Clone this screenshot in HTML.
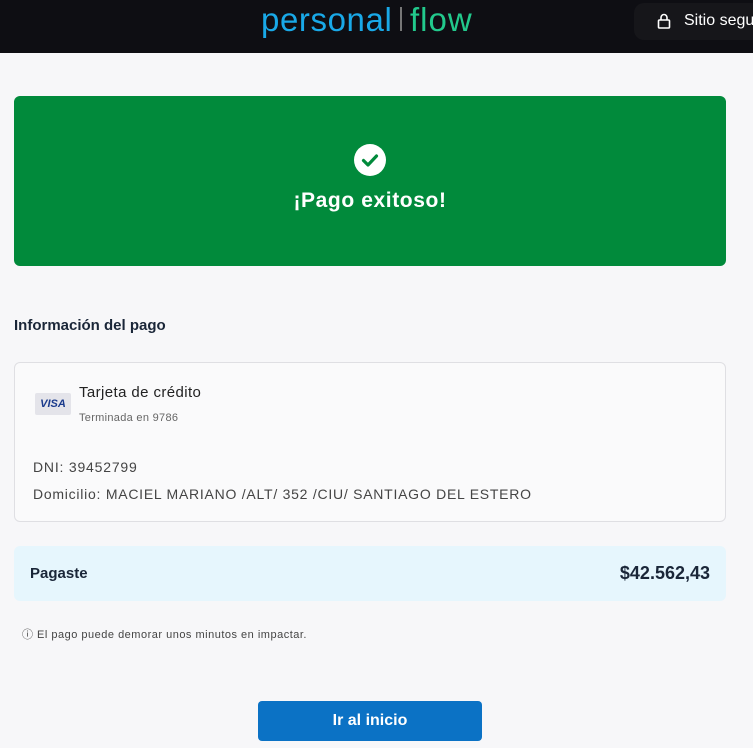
<html><head><style>
body{margin:0;width:753px;height:748px;background:#f7f7f9;font-family:"Liberation Sans",sans-serif;position:relative;overflow:hidden}
.hdr{position:absolute;left:0;top:0;width:753px;height:53px;background:#0e0e13}
.logo{position:absolute;top:1px;font-size:33px;color:#19a9e8;letter-spacing:0px}
.sep{position:absolute;left:400px;top:7px;width:2px;height:24px;background:#777}
.safe{position:absolute;left:634px;top:3px;width:140px;height:37px;background:#16161a;border-radius:10px;color:#fff;font-size:16px}
.green{position:absolute;left:14px;top:96px;width:712px;height:170px;background:#018a3b;border-radius:6px;color:#fff;text-align:center}
.card{position:absolute;left:14px;top:362px;width:710px;height:158px;border:1px solid #dfdfe3;border-radius:6px;background:#fafafb}
.pay{position:absolute;left:14px;top:546px;width:712px;height:55px;background:#e6f6fd;border-radius:6px}
.btn{position:absolute;left:258px;top:701px;width:224px;height:40px;background:#0b72c5;border-radius:4px;color:#fff;font-weight:bold;font-size:16px;text-align:center;line-height:40px}
</style></head><body>
<div class="hdr">
<div class="logo" style="left:261px;letter-spacing:0.6px">personal</div>
<div class="logo" style="left:410px;color:#22c98c;letter-spacing:1px">flow</div>
<div class="sep"></div>
<div class="safe"><svg style="position:absolute;left:23px;top:10px" width="14" height="16" viewBox="0 0 14 16"><rect x="1.5" y="7" width="11" height="8" rx="1" fill="none" stroke="#fff" stroke-width="1.6"/><path d="M4 7V4.5a3 3 0 0 1 6 0V7" fill="none" stroke="#fff" stroke-width="1.6"/></svg><span style="position:absolute;left:50px;top:9px">Sitio seguro</span></div>
</div>
<div class="green">
<svg style="position:absolute;left:340px;top:48px" width="32" height="32" viewBox="0 0 32 32"><circle cx="16" cy="16" r="16" fill="#fff"/><path d="M9.5 16.5l4.5 4.5 8.5-9" fill="none" stroke="#018a3b" stroke-width="3.2" stroke-linecap="round" stroke-linejoin="round"/></svg>
<div style="position:absolute;left:0;right:0;top:93px;font-size:21px;font-weight:bold;letter-spacing:0.6px">¡Pago exitoso!</div>
</div>
<div style="position:absolute;left:14px;top:317px;font-size:15px;font-weight:bold;color:#1a2638">Información del pago</div>
<div class="card">
<div style="position:absolute;left:20px;top:30px;width:36px;height:22px;background:#e4e4ea;border-radius:2px;color:#1a3a8c;font-weight:bold;font-style:italic;font-size:11px;text-align:center;line-height:22px">VISA</div>
<div style="position:absolute;left:64px;top:21px;font-size:15px;color:#222;letter-spacing:0.4px">Tarjeta de crédito</div>
<div style="position:absolute;left:64px;top:49px;font-size:11px;color:#666;letter-spacing:0.3px">Terminada en 9786</div>
<div style="position:absolute;left:18px;top:96px;font-size:14px;color:#444;letter-spacing:0.8px">DNI: 39452799</div>
<div style="position:absolute;left:18px;top:123px;font-size:14px;color:#444;letter-spacing:0.75px">Domicilio: MACIEL MARIANO /ALT/ 352 /CIU/ SANTIAGO DEL ESTERO</div>
</div>
<div class="pay">
<div style="position:absolute;left:16px;top:19px;font-size:15px;font-weight:bold;color:#1a2638">Pagaste</div>
<div style="position:absolute;right:16px;top:17px;font-size:18px;font-weight:bold;color:#1a2638">$42.562,43</div>
</div>
<div style="position:absolute;left:22px;top:626px;font-size:11px;color:#444;letter-spacing:0.5px">ⓘ El pago puede demorar unos minutos en impactar.</div>
<div class="btn">Ir al inicio</div>
</body></html>
